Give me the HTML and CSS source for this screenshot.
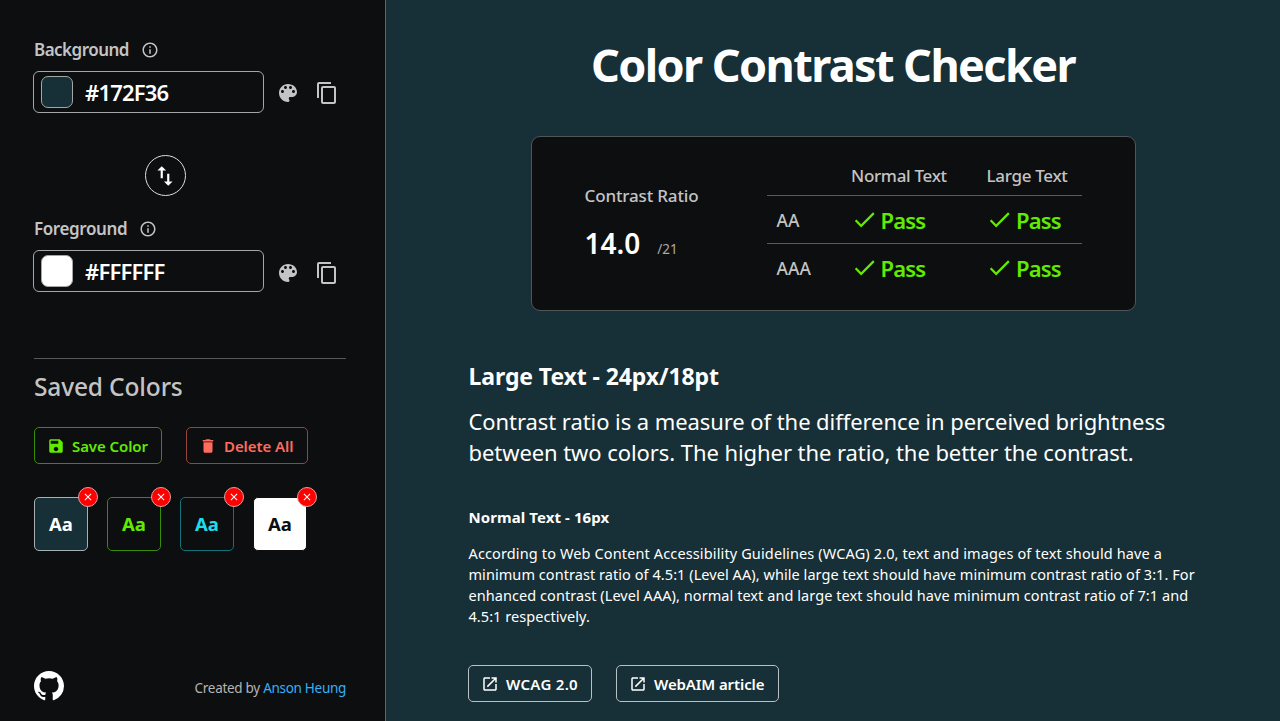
FILE: index.html
```html
<!DOCTYPE html>
<html lang="en">
<head>
<meta charset="utf-8">
<title>Color Contrast Checker</title>
<link rel="stylesheet" href="styles.css">
</head>
<body>
<svg class="defs" width="0" height="0">
  <symbol id="info" viewBox="0 0 24 24"><path d="M11 7h2v2h-2zm0 4h2v6h-2zm1-9C6.480 2 2 6.480 2 12s4.480 10 10 10 10-4.480 10-10S17.520 2 12 2zm0 18c-4.410 0-8-3.590-8-8s3.590-8 8-8 8 3.590 8 8-3.590 8-8 8z"/></symbol>
  <symbol id="palette" viewBox="0 0 24 24"><path d="M12 3c-4.970 0-9 4.030-9 9s4.030 9 9 9c.83 0 1.500-.67 1.500-1.500 0-.39-.15-.74-.39-1.010-.23-.26-.38-.61-.38-.99 0-.83.67-1.500 1.500-1.500H16c2.760 0 5-2.240 5-5 0-4.420-4.030-8-9-8zm-5.500 9c-.83 0-1.500-.67-1.500-1.500S5.670 9 6.500 9 8 9.670 8 10.500 7.330 12 6.500 12zm3-4C8.670 8 8 7.330 8 6.500S8.670 5 9.500 5s1.500.67 1.500 1.500S10.330 8 9.500 8zm5 0c-.83 0-1.500-.67-1.500-1.500S13.670 5 14.500 5s1.500.67 1.500 1.500S15.330 8 14.500 8zm3 4c-.83 0-1.500-.67-1.500-1.500S16.670 9 17.500 9s1.500.67 1.500 1.500-.67 1.500-1.500 1.500z"/></symbol>
  <symbol id="copy" viewBox="0 0 24 24"><path d="M16 1H4c-1.100 0-2 .9-2 2v14h2V3h12V1zm3 4H8c-1.100 0-2 .9-2 2v14c0 1.100.9 2 2 2h11c1.100 0 2-.9 2-2V7c0-1.100-.9-2-2-2zm0 16H8V7h11v14z"/></symbol>
  <symbol id="swap" viewBox="0 0 24 24"><path d="M16 17.010V10h-2v7.010h-3L15 21l4-3.990h-3zM9 3L5 6.990h3V14h2V6.990h3L9 3z"/></symbol>
  <symbol id="save" viewBox="0 0 24 24"><path d="M17 3H5c-1.110 0-2 .9-2 2v14c0 1.100.89 2 2 2h14c1.100 0 2-.9 2-2V7l-4-4zm-5 16c-1.660 0-3-1.340-3-3s1.340-3 3-3 3 1.340 3 3-1.340 3-3 3zm3-10H5V5h10v4z"/></symbol>
  <symbol id="trash" viewBox="0 0 24 24"><path d="M6 19c0 1.100.9 2 2 2h8c1.100 0 2-.9 2-2V7H6v12zM19 4h-3.500l-1-1h-5l-1 1H5v2h14V4z"/></symbol>
  <symbol id="close" viewBox="0 0 24 24"><path d="M19 6.410L17.590 5 12 10.590 6.410 5 5 6.410 10.590 12 5 17.590 6.410 19 12 13.410 17.590 19 19 17.590 13.410 12z"/></symbol>
  <symbol id="check" viewBox="0 0 24 24"><path d="M9 16.170L4.830 12l-1.420 1.410L9 19 21 7l-1.410-1.410z"/></symbol>
  <symbol id="open" viewBox="0 0 24 24"><path d="M19 19H5V5h7V3H5c-1.110 0-2 .9-2 2v14c0 1.100.89 2 2 2h14c1.100 0 2-.9 2-2v-7h-2v7zM14 3v2h3.590l-9.830 9.830 1.410 1.410L19 6.410V10h2V3h-7z"/></symbol>
  <symbol id="github" viewBox="0 0 16 16"><path d="M8 0C3.580 0 0 3.580 0 8c0 3.540 2.290 6.530 5.470 7.590.4.070.55-.17.55-.38 0-.19-.01-.82-.01-1.490-2.010.37-2.530-.49-2.690-.94-.09-.23-.48-.94-.82-1.130-.28-.15-.68-.52-.01-.53.63-.01 1.080.58 1.230.82.72 1.210 1.870.87 2.330.66.07-.52.28-.87.51-1.070-1.780-.2-3.640-.89-3.640-3.950 0-.87.31-1.590.82-2.150-.08-.2-.36-1.020.08-2.120 0 0 .67-.21 2.200.82.64-.18 1.320-.27 2-.27s1.360.09 2 .27c1.530-1.040 2.200-.82 2.200-.82.44 1.100.16 1.920.08 2.120.51.56.82 1.270.82 2.150 0 3.070-1.870 3.750-3.650 3.950.29.25.54.73.54 1.480 0 1.070-.01 1.930-.01 2.200 0 .21.15.46.55.38A8.010 8.010 0 0 0 16 8c0-4.420-3.580-8-8-8z"/></symbol>
</svg>
<div class="app">
  <aside class="sidebar">
    <section class="field">
      <div class="field-label"><span class="label-bg">Background</span><svg class="info"><use href="#info"/></svg></div>
      <div class="field-row">
        <div class="input"><i class="chip chip-bg"></i><span class="hex">#172F36</span></div>
        <svg class="palette"><use href="#palette"/></svg><svg class="copy"><use href="#copy"/></svg>
      </div>
    </section>
    <button class="swap"><svg><use href="#swap"/></svg></button>
    <section class="field foreground">
      <div class="field-label"><span class="label-fg">Foreground</span><svg class="info"><use href="#info"/></svg></div>
      <div class="field-row">
        <div class="input"><i class="chip chip-fg"></i><span class="hex">#FFFFFF</span></div>
        <svg class="palette"><use href="#palette"/></svg><svg class="copy"><use href="#copy"/></svg>
      </div>
    </section>
    <section class="saved">
      <h2>Saved Colors</h2>
      <div class="actions">
        <button class="btn save"><svg><use href="#save"/></svg><span>Save Color</span></button>
        <button class="btn delete"><svg><use href="#trash"/></svg><span>Delete All</span></button>
      </div>
      <div class="swatches">
        <div class="swatch slate"><span>Aa</span><i class="remove"><svg><use href="#close"/></svg></i></div>
        <div class="swatch green"><span>Aa</span><i class="remove"><svg><use href="#close"/></svg></i></div>
        <div class="swatch cyan"><span>Aa</span><i class="remove"><svg><use href="#close"/></svg></i></div>
        <div class="swatch white"><span>Aa</span><i class="remove"><svg><use href="#close"/></svg></i></div>
      </div>
    </section>
    <footer class="footer"><svg class="github"><use href="#github"/></svg><span class="credit">Created by <a>Anson Heung</a></span></footer>
  </aside>
  <main class="main">
    <h1>Color Contrast Checker</h1>
    <section class="card">
      <div class="ratio">
        <span class="ratio-label">Contrast Ratio</span>
        <div class="ratio-value"><span class="number">14.0</span><span class="max">/21</span></div>
      </div>
      <div class="results">
        <div class="row head"><span></span><span>Normal Text</span><span>Large Text</span></div>
        <div class="row"><span class="level">AA</span><span class="pass"><svg><use href="#check"/></svg><b>Pass</b></span><span class="pass"><svg><use href="#check"/></svg><b>Pass</b></span></div>
        <div class="row"><span class="level">AAA</span><span class="pass"><svg><use href="#check"/></svg><b>Pass</b></span><span class="pass"><svg><use href="#check"/></svg><b>Pass</b></span></div>
      </div>
    </section>
    <article class="sample">
      <h3 class="large-title">Large Text - 24px/18pt</h3>
      <p class="large">Contrast ratio is a measure of the difference in perceived brightness<br>between two colors. The higher the ratio, the better the contrast.</p>
      <h4 class="normal-title">Normal Text - 16px</h4>
      <p class="normal"><span class="lead">According to Web Content Accessibility Guidelines (WCAG) 2.0, text and images of text should have a</span><br>minimum contrast ratio of 4.5:1 (Level AA), while large text should have minimum contrast ratio of 3:1. For<br>enhanced contrast (Level AAA), normal text and large text should have minimum contrast ratio of 7:1 and<br>4.5:1 respectively.</p>
      <div class="links">
        <a class="btn link wcag"><svg><use href="#open"/></svg><span>WCAG 2.0</span></a>
        <a class="btn link webaim"><svg><use href="#open"/></svg><span>WebAIM article</span></a>
      </div>
    </article>
  </main>
</div>
</body>
</html>
```
FILE: styles.css
```css
* { box-sizing: border-box; }
body { margin: 0; font-family: "Noto Sans", "Open Sans", sans-serif; color: #fff; background: #172f36; }
svg { fill: currentColor; flex: none; }
h1, h2, h3, h4, p { margin: 0; white-space: nowrap; }
button { font-family: inherit; background: none; padding: 0; }
i { font-style: normal; }
.defs { display: none; }
.app { display: flex; width: 1280px; height: 721px; overflow: hidden; }
.sidebar { flex: none; display: flex; flex-direction: column; width: 386px; padding: 37px 39px 20px 33px; background: #0c0e10; border-right: 1px solid #56666a; color: #c4c4c4; }
.field-label { display: flex; align-items: center; height: 25px; padding-left: 1px; gap: 12px; font-size: 17px; font-weight: 600; line-height: 25px; }
.label-bg { letter-spacing: -.52px; }
.label-fg { letter-spacing: -.4px; }
.info { width: 18px; height: 18px; }
.field-row { display: flex; align-items: center; height: 42px; margin-top: 9px; }
.input { display: flex; align-items: center; gap: 12px; width: 231px; height: 42px; padding: 0 7px; border: 1px solid #a6a6a6; border-radius: 6px; color: #fff; font-size: 22px; font-weight: 600; }
.hex { letter-spacing: -.8px; }
.chip { width: 32px; height: 32px; border: 1px solid #a6a6a6; border-radius: 7px; }
.chip-bg { background: #172f36; }
.chip-fg { background: #fff; }
.palette { width: 24px; height: 24px; margin: 1px 0 0 12px; }
.copy { width: 24px; height: 24px; margin: 1px 0 0 15px; }
.foreground .palette, .foreground .copy { margin-top: 3px; }
.swap { display: flex; align-items: center; justify-content: center; width: 41px; height: 41px; margin: 42px 0 20px 111.500px; border: 1px solid #dedede; border-radius: 50%; color: #fff; }
.swap svg { width: 26px; height: 26px; }
.saved { margin: 66px 0 0 1px; border-top: 1px solid #565859; }
.saved h2 { margin-top: 10px; font-size: 24.500px; line-height: 36px; font-weight: 500; letter-spacing: -.15px; }
.actions { display: flex; gap: 24px; margin-top: 22px; }
.btn { display: flex; align-items: center; height: 37px; padding-left: 12px; border: 1px solid; border-radius: 5px; font-size: 15px; font-weight: 600; white-space: nowrap; letter-spacing: -.08px; }
.btn svg { width: 18px; height: 18px; margin-right: 7px; }
.save { width: 128px; border-color: #388b05; color: #60eb00; }
.delete { width: 122px; border-color: #97443d; color: #ff6b5e; }
.swatches { display: flex; gap: 19px; margin-top: 33px; }
.swatch { position: relative; display: flex; align-items: center; justify-content: center; width: 54px; height: 54px; border: 1px solid; border-radius: 5px; font-size: 18.500px; line-height: 24px; font-weight: 700; }
.swatch.slate { background: #172f36; border-color: #a8afb1; color: #fff; }
.swatch.green { border-color: #388b05; color: #60eb00; }
.swatch.cyan { border-color: #14727b; color: #1fdce9; }
.swatch.white { background: #fff; border-color: #0c0e10; color: #0c0e10; }
.remove { position: absolute; top: -11px; right: -10.500px; display: flex; align-items: center; justify-content: center; width: 20px; height: 20px; border: 1px solid #e0a0a0; border-radius: 50%; background: #f00; color: #fff; }
.remove svg { width: 12px; height: 12px; }
.footer { display: flex; align-items: center; justify-content: space-between; margin-top: auto; padding-left: 1px; font-size: 13.500px; }
.github { width: 30px; height: 30px; color: #fff; }
.credit { padding-top: 4px; color: #b5b5b5; letter-spacing: -.29px; }
.credit a { color: #37b0f5; }
.main { flex: 1; display: flex; flex-direction: column; align-items: center; }
h1 { margin-top: 35px; font-size: 45px; line-height: 60px; font-weight: 700; letter-spacing: -1.600px; }
.card { display: flex; width: 605px; height: 175px; margin-top: 41px; padding: 20px 53px; border: 1px solid #4f5658; border-radius: 9px; background: #0c0e10; color: #c4c4c4; }
.ratio { width: 182px; padding-top: 26px; }
.ratio-label { font-size: 17px; font-weight: 500; line-height: 26px; letter-spacing: -.15px; }
.ratio-value { display: flex; align-items: baseline; gap: 17px; margin-top: 14px; line-height: 40px; }
.number { font-size: 28px; font-weight: 600; color: #fff; }
.max { font-size: 13.500px; color: #aaa; }
.results { width: 315px; }
.row { display: grid; grid-template-columns: 84.500px 135.500px 1fr; align-items: center; height: 48px; border-bottom: 1px solid #5a5c5d; }
.row.head { height: 39px; padding-bottom: 1px; font-size: 17px; font-weight: 500; letter-spacing: -.3px; white-space: nowrap; }
.row:last-child { border: 0; height: 47px; }
.level { padding-left: 10px; font-size: 17.500px; font-weight: 500; }
.pass { display: flex; align-items: center; gap: 3px; color: #60eb00; font-size: 22px; letter-spacing: -.85px; }
.pass svg { width: 27px; height: 27px; margin-left: -.5px; }
.pass b { font-weight: 600; }
.sample { width: 728px; margin: 49px 1px 0 0; }
.large-title { font-size: 23px; line-height: 32px; font-weight: 700; letter-spacing: -.1px; }
.large { margin-top: 14px; font-size: 22px; line-height: 31px; letter-spacing: -.07px; }
.normal-title { margin-top: 39px; font-size: 15px; line-height: 20px; font-weight: 700; letter-spacing: .08px; }
.normal { margin-top: 16px; font-size: 14.500px; line-height: 21px; letter-spacing: .06px; }
.lead { letter-spacing: .13px; }
.links { display: flex; gap: 24px; margin: 38px 0 0 -.5px; }
.link { border-color: #b9c1c3; }
.wcag { width: 124px; letter-spacing: .3px; }
.webaim { width: 163px; letter-spacing: -.1px; }
```
